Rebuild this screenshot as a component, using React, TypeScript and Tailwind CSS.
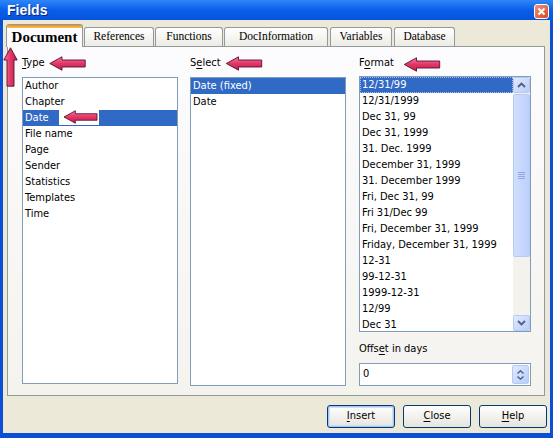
import React from "react";

const ui = { fontFamily: '"DejaVu Sans Condensed", "Liberation Sans", sans-serif' };
const serif = { fontFamily: '"Liberation Serif", serif' };

function LeftArrow({ className }: { className: string }) {
  return (
    <svg viewBox="0 0 37 15" className={className}>
      <defs>
        <linearGradient id="ag" x1="0" y1="0" x2="0" y2="1">
          <stop offset="0" stopColor="#f47a9c" />
          <stop offset="0.5" stopColor="#e23666" />
          <stop offset="1" stopColor="#c01f4c" />
        </linearGradient>
      </defs>
      <path d="M0.8 7.5 L13 0.8 L13 4 L36.2 4 L36.2 11 L13 11 L13 14.2 Z" fill="url(#ag)" stroke="#5a1030" strokeWidth="0.9" />
    </svg>
  );
}

function UpArrow({ className }: { className: string }) {
  return (
    <svg viewBox="0 0 15 40" className={className}>
      <defs>
        <linearGradient id="ug" x1="0" y1="0" x2="1" y2="0">
          <stop offset="0" stopColor="#f47a9c" />
          <stop offset="0.5" stopColor="#e23666" />
          <stop offset="1" stopColor="#c01f4c" />
        </linearGradient>
      </defs>
      <path d="M7.5 0.8 L14.2 13 L11 13 L11 39.2 L4 39.2 L4 13 L0.8 13 Z" fill="url(#ug)" stroke="#5a1030" strokeWidth="0.9" />
    </svg>
  );
}

function Tab({ label, active, w }: { label: string; active?: boolean; w: string }) {
  if (active) {
    return (
      <div
        className={`${w} relative z-10 -mb-px flex h-[23px] flex-col self-end overflow-hidden rounded-t-[3px] border border-b-0 border-[#919b9c] bg-[#fcfcfe]`}
      >
        <div className="h-[3px] bg-gradient-to-b from-[#e68b2c] to-[#ffc73c]" />
        <div className="flex flex-1 items-center justify-center text-[15px] font-bold leading-none text-black" style={serif}>
          {label}
        </div>
      </div>
    );
  }
  return (
    <div
      className={`${w} flex h-[19px] items-center justify-center self-end rounded-t-[3px] border border-b-0 border-[#919b9c] bg-gradient-to-b from-white to-[#ecebe5] text-[11.5px] leading-none text-black`}
      style={serif}
    >
      {label}
    </div>
  );
}

function Row({ text, selected }: { text: string; selected?: boolean }) {
  return (
    <div className={`flex h-4 items-center whitespace-nowrap px-[2px] text-[11px] ${selected ? "bg-[#316ac5] text-white" : "text-black"}`}>
      {text}
    </div>
  );
}

const types = ["Author", "Chapter", "Date", "File name", "Page", "Sender", "Statistics", "Templates", "Time"];
const formats = [
  "12/31/99",
  "12/31/1999",
  "Dec 31, 99",
  "Dec 31, 1999",
  "31. Dec. 1999",
  "December 31, 1999",
  "31. December 1999",
  "Fri, Dec 31, 99",
  "Fri 31/Dec 99",
  "Fri, December 31, 1999",
  "Friday, December 31, 1999",
  "12-31",
  "99-12-31",
  "1999-12-31",
  "12/99",
  "Dec 31",
];

function Chevron({ up }: { up?: boolean }) {
  return (
    <svg viewBox="0 0 9 6" className="h-[6px] w-[9px]">
      <path d={up ? "M1 5 L4.5 1.5 L8 5" : "M1 1 L4.5 4.5 L8 1"} fill="none" stroke="#4d6185" strokeWidth="1.8" />
    </svg>
  );
}

function ScrollBtn({ up }: { up?: boolean }) {
  return (
    <div className="flex h-[16px] items-center justify-center rounded-[2px] border border-[#b7caf5] bg-gradient-to-br from-[#e1eafe] to-[#b9cdf9]">
      <Chevron up={up} />
    </div>
  );
}

function Btn({ label, u, primary }: { label: string; u: string; primary?: boolean }) {
  const rest = label.slice(1);
  return (
    <div
      className={`flex h-[23px] w-[68px] items-center justify-center rounded-[3px] border border-[#003c74] bg-gradient-to-b from-white to-[#e6e4dc] text-[11px] text-black ${
        primary ? "shadow-[inset_0_0_0_1px_#a9c4f2,inset_0_0_0_2px_#cfdff9]" : ""
      }`}
      style={ui}
    >
      <span className="underline underline-offset-2">{u}</span>
      {rest}
    </div>
  );
}

export default function App() {
  return (
    <div className="relative h-[438px] w-[553px] overflow-hidden bg-[#0a4fd6]" style={ui}>
      {/* title bar */}
      <div className="flex h-[20px] items-center justify-between bg-gradient-to-b from-[#2f86f8] via-[#0a5ee8] to-[#0653dc] pl-[7px] pr-[4px]">
        <span className="text-[14px] font-bold text-white [text-shadow:1px_1px_0_#0a2a80]" style={{ fontFamily: '"Liberation Sans", sans-serif' }}>
          Fields
        </span>
        <div className="mt-[2px] flex h-[15px] w-[15px] items-center justify-center rounded-[3px] border border-white bg-gradient-to-br from-[#f0917a] to-[#d8431c]">
          <svg viewBox="0 0 9 9" className="h-[9px] w-[9px]">
            <path d="M1.5 1.5 L7.5 7.5 M7.5 1.5 L1.5 7.5" stroke="white" strokeWidth="2" />
          </svg>
        </div>
      </div>

      {/* body */}
      <div className="ml-[3px] mr-[3px] flex h-[413px] flex-col bg-[#ece9d8]">
        {/* tabs */}
        <div className="ml-[3px] mt-[4px] flex h-[22px] gap-px">
          <Tab label="Document" active w="w-[77px]" />
          <Tab label="References" w="w-[70px]" />
          <Tab label="Functions" w="w-[68px]" />
          <Tab label="DocInformation" w="w-[104px]" />
          <Tab label="Variables" w="ml-px w-[62px]" />
          <Tab label="Database" w="ml-px w-[61px]" />
        </div>

        {/* panel */}
        <div className="ml-[4px] mr-[5px] flex h-[350px] gap-[12px] border border-[#919b9c] bg-gradient-to-b from-[#fcfcfe] to-[#f4f3ee] pl-[14px] pt-[9px]">
          <div className="flex w-[156px] flex-col">
            <div className="h-[14px] text-[11px] leading-[14px] text-black">
              <span className="underline underline-offset-2">T</span>ype
            </div>
            <div className="mt-[7px] h-[307px] border border-[#7f9db9] bg-white">
              {types.map((t) => (
                <Row key={t} text={t} selected={t === "Date"} />
              ))}
            </div>
          </div>

          <div className="flex w-[156px] flex-col">
            <div className="h-[14px] text-[11px] leading-[14px] text-black">
              S<span className="underline underline-offset-2">e</span>lect
            </div>
            <div className="mt-[7px] h-[309px] border border-[#7f9db9] bg-white">
              <Row text="Date (fixed)" selected />
              <Row text="Date" />
            </div>
          </div>

          <div className="ml-px flex w-[172px] flex-col">
            <div className="h-[14px] text-[11px] leading-[14px] text-black">
              F<span className="underline underline-offset-2">o</span>rmat
            </div>
            <div className="mt-[6px] flex h-[256px] border border-[#7f9db9] bg-white">
              <div className="flex-1 overflow-hidden">
                {formats.map((f, i) =>
                  i === 0 ? (
                    <div key={f} className="flex h-4 items-center whitespace-nowrap border border-dotted border-[#a8bde6] bg-[#316ac5] px-px text-[11px] text-white">
                      {f}
                    </div>
                  ) : (
                    <Row key={f} text={f} />
                  )
                )}
              </div>
              <div className="flex w-[17px] flex-col bg-[#f3f2ec]">
                <ScrollBtn up />
                <div className="mt-px flex h-[163px] items-center justify-center rounded-[2px] border border-[#b7caf5] bg-gradient-to-r from-[#d0defd] to-[#bed0fb]">
                  <div className="flex flex-col gap-px">
                    <div className="h-px w-[7px] bg-[#8ea8e6]" />
                    <div className="h-px w-[7px] bg-[#8ea8e6]" />
                    <div className="h-px w-[7px] bg-[#8ea8e6]" />
                    <div className="h-px w-[7px] bg-[#8ea8e6]" />
                  </div>
                </div>
                <div className="flex-1" />
                <ScrollBtn />
              </div>
            </div>

            <div className="mt-[10px] h-[14px] text-[11px] leading-[14px] text-black">
              Offs<span className="underline underline-offset-2">e</span>t in days
            </div>
            <div className="mt-[7px] flex h-[23px] items-center border border-[#7f9db9] bg-white pl-[3px] pr-px">
              <span className="flex-1 text-[11px] text-black">0</span>
              <div className="flex h-[19px] w-[17px] flex-col items-center justify-center gap-[2px] rounded-[2px] border border-[#b7caf5] bg-gradient-to-br from-[#e1eafe] to-[#b9cdf9]">
                <svg viewBox="0 0 7 4" className="h-[4px] w-[7px]">
                  <path d="M0.5 3.5 L3.5 0.8 L6.5 3.5" fill="none" stroke="#4d6185" strokeWidth="1.4" />
                </svg>
                <svg viewBox="0 0 7 4" className="h-[4px] w-[7px]">
                  <path d="M0.5 0.5 L3.5 3.2 L6.5 0.5" fill="none" stroke="#4d6185" strokeWidth="1.4" />
                </svg>
              </div>
            </div>
          </div>
        </div>

        {/* buttons */}
        <div className="mr-[3px] mt-[9px] flex justify-end gap-[8px]">
          <Btn label="Insert" u="I" primary />
          <Btn label="Close" u="C" />
          <Btn label="Help" u="H" />
        </div>
      </div>

      {/* annotation arrows */}
      <UpArrow className="absolute left-[3px] top-[47px] h-[40px] w-[15px]" />
      <LeftArrow className="absolute left-[49px] top-[56px] h-[15px] w-[37px]" />
      <LeftArrow className="absolute left-[225px] top-[56px] h-[15px] w-[38px]" />
      <LeftArrow className="absolute left-[403px] top-[57px] h-[15px] w-[38px]" />
      <div className="absolute left-[59px] top-[109px] flex h-[16px] w-[40px] items-center justify-end bg-white">
        <LeftArrow className="h-[14px] w-[37px]" />
      </div>
    </div>
  );
}
